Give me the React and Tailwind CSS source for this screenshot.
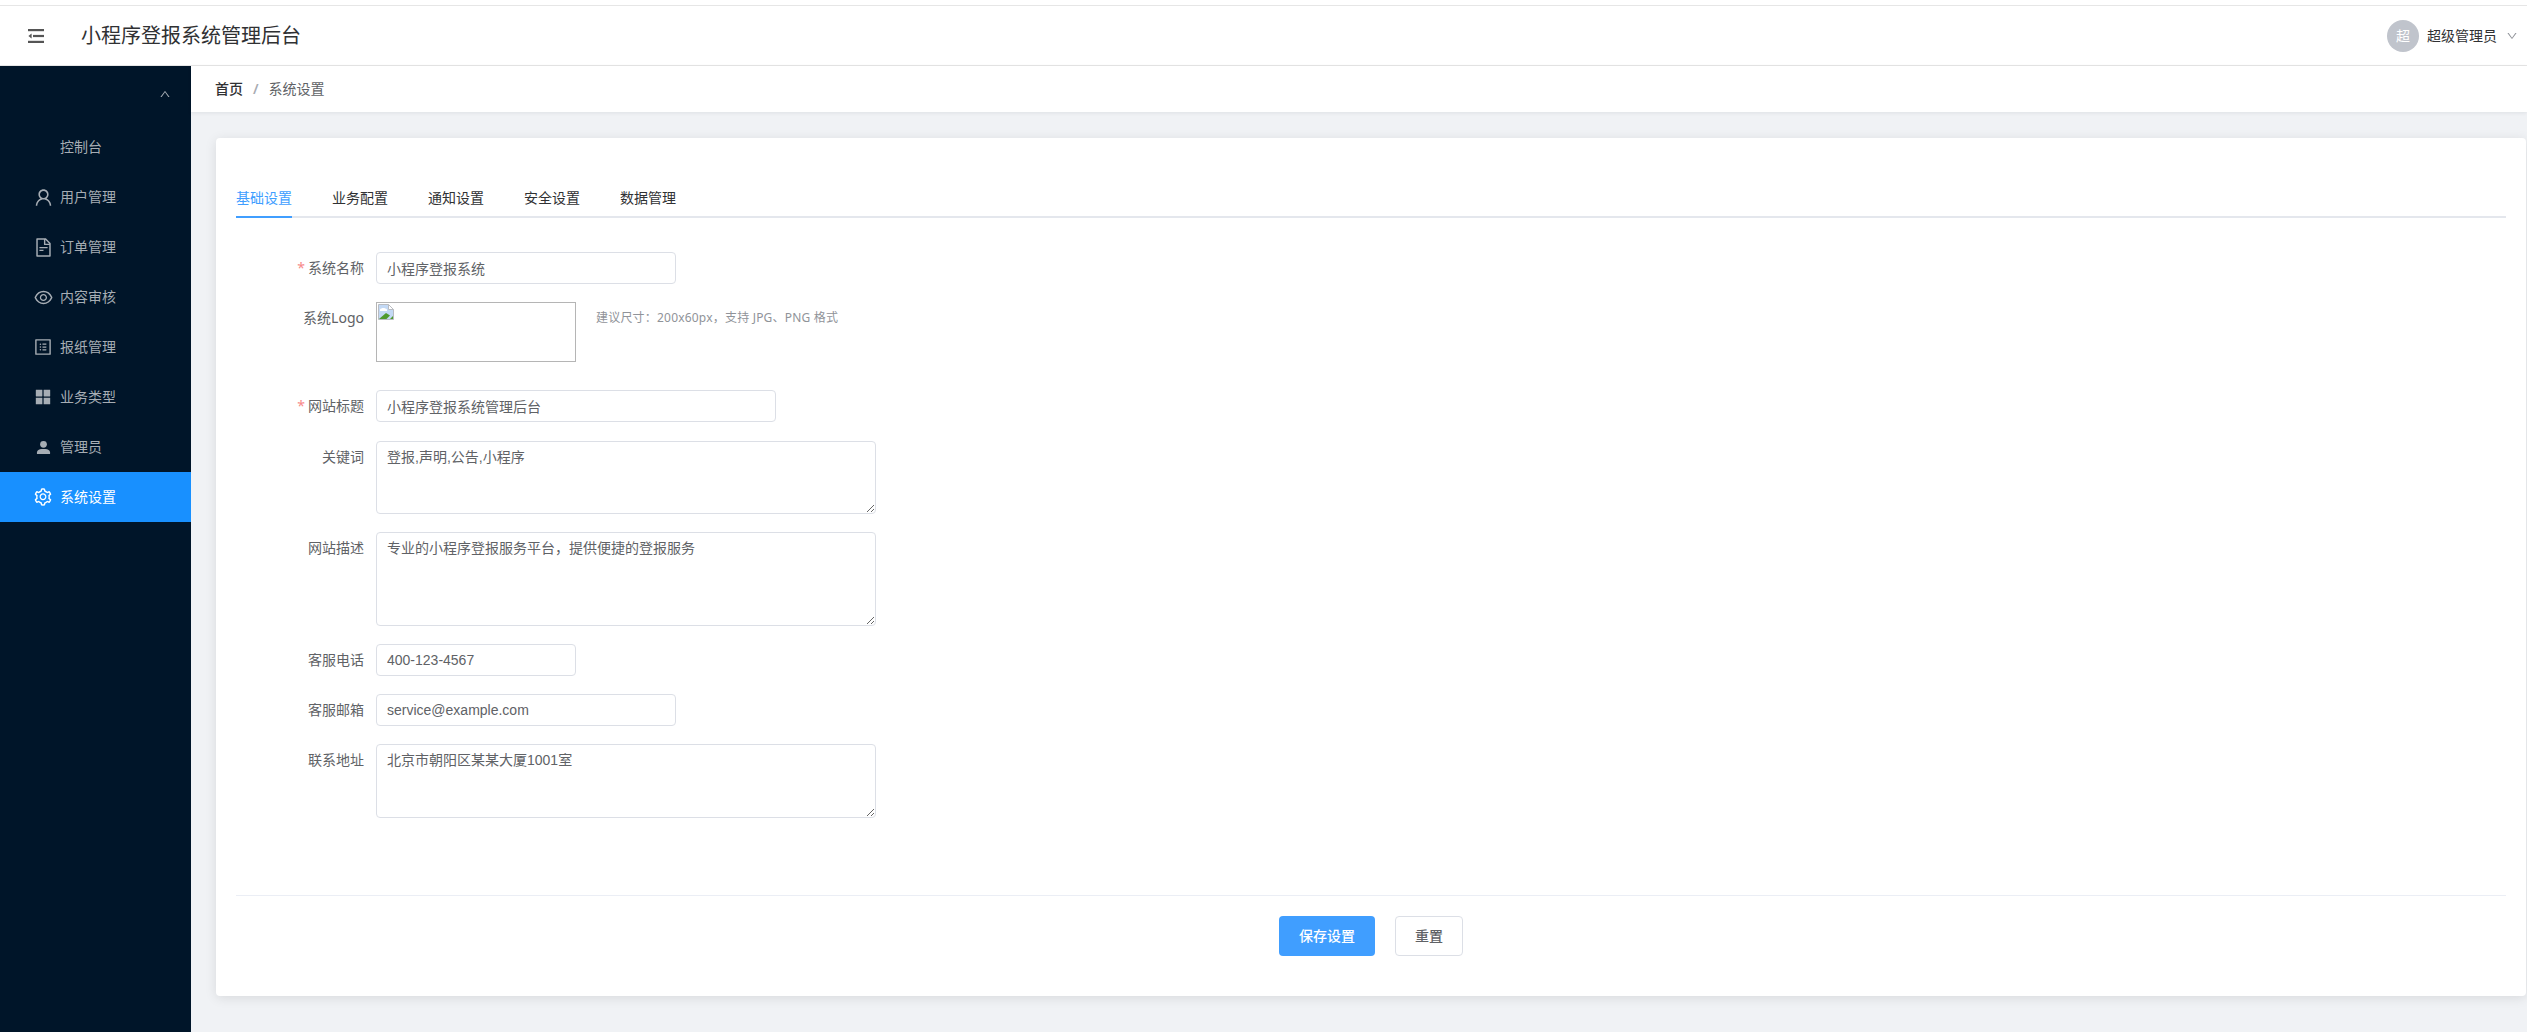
import React from "react";
import {
  AiOutlineUp,
  AiOutlineDown,
  AiOutlineUser,
  AiOutlineFileText,
  AiOutlineEye,
  AiOutlineProfile,
  AiFillAppstore,
  AiOutlineSetting,
} from "react-icons/ai";

function FoldIcon() {
  return (
    <svg viewBox="0 0 16 14" className="w-4 h-[14px] ml-[28px] text-[#555]" fill="currentColor">
      <rect x="0" y="0" width="16" height="2.2" />
      <rect x="5" y="5.9" width="11" height="2.2" />
      <rect x="0" y="11.8" width="16" height="2.2" />
      <path d="M3.6 4.6V9.4L0.4 7z" />
    </svg>
  );
}

function UserFilled({ className }) {
  return (
    <svg viewBox="0 0 16 16" className={className} fill="currentColor">
      <circle cx="8" cy="4.6" r="3.6" />
      <path d="M1 15v-1.6C1 11 3.4 9.6 6 9.6h4c2.6 0 5 1.4 5 3.8V15z" />
    </svg>
  );
}

function BrokenImage() {
  return (
    <svg viewBox="0 0 16 16" className="w-4 h-4 mt-px ml-px">
      <path d="M0.5 0.5H10.5L15.5 5.5V15.5H0.5z" fill="#c3d9f5" stroke="#b9bcc2" />
      <path d="M10.5 0.5V5.5H15.5z" fill="#fff" stroke="#b9bcc2" />
      <path d="M2 5.5C3.5 3.5 7 3.5 9 5.5V7H2z" fill="#fff" />
      <path d="M1 15L8 9L12 11.5L8.5 15z" fill="#4f9a2e" />
      <path d="M12 15L15 12V15z" fill="#4f9a2e" />
    </svg>
  );
}

const menu = [
  { label: "控制台" },
  { label: "用户管理", icon: <AiOutlineUser size={21} /> },
  { label: "订单管理", icon: <AiOutlineFileText size={21} /> },
  { label: "内容审核", icon: <AiOutlineEye size={21} /> },
  { label: "报纸管理", icon: <AiOutlineProfile size={20} /> },
  { label: "业务类型", icon: <AiFillAppstore size={20} /> },
  { label: "管理员", icon: <UserFilled className="w-[15px] h-[15px]" /> },
  { label: "系统设置", icon: <AiOutlineSetting size={20} />, active: true },
];

const tabs = ["基础设置", "业务配置", "通知设置", "安全设置", "数据管理"];

const inputCls =
  "block h-8 rounded-[4px] border border-[#dcdfe6] bg-white px-[10px] text-sm text-[#606266] outline-none font-['Liberation_Sans','Noto_Sans_CJK_SC',sans-serif]";
const areaCls =
  "block w-[500px] rounded-[4px] border border-[#dcdfe6] bg-white px-[10px] py-[5px] text-sm leading-[21px] text-[#606266] outline-none font-['Liberation_Sans','Noto_Sans_CJK_SC',sans-serif]";

function Row({ label, required, children, className = "" }) {
  return (
    <div className={`flex mb-[18px] ${className}`}>
      <label className="w-[120px] shrink-0 pr-3 text-right text-sm leading-8 text-[#606266]">
        {required && <span className="mr-[3px] text-[#f78989]">*</span>}
        {label}
      </label>
      {children}
    </div>
  );
}

export default function App() {
  return (
    <div
      lang="zh-CN"
      className="h-screen w-full overflow-hidden flex flex-col bg-[#f0f2f5] font-['Noto_Sans','Noto_Sans_CJK_SC',sans-serif]"
    >
      <div className="h-[6px] shrink-0 bg-white border-b border-[#e6e6e6]" />
      <header className="h-[60px] shrink-0 flex items-center bg-white border-b border-[#e6e6e6]">
        <FoldIcon />
        <h1 className="ml-[37px] text-xl text-[#303133]">小程序登报系统管理后台</h1>
        <div className="ml-auto flex items-center pr-[9px]">
          <div className="w-8 h-8 rounded-full bg-[#c0c4cc] text-white text-sm flex items-center justify-center">超</div>
          <span className="ml-2 text-sm text-[#303133]">超级管理员</span>
          <AiOutlineDown size={12} className="ml-[9px] text-[#909399]" />
        </div>
      </header>

      <div className="flex-1 flex min-h-0">
        <aside className="w-[191px] shrink-0 bg-[#001529] text-[#a6adb4]">
          <div className="h-[56px] flex items-center justify-end pr-[20px]">
            <AiOutlineUp size={12} />
          </div>
          {menu.map((item) => (
            <div
              key={item.label}
              className={`h-[50px] flex items-center text-sm ${item.active ? "bg-[#1890ff] text-white" : ""}`}
            >
              <span className="ml-[30px] w-[26px] mr-[4px] shrink-0 flex items-center justify-center">{item.icon}</span>
              {item.label}
            </div>
          ))}
        </aside>

        <main className="flex-1 min-w-0 flex flex-col">
          <div className="h-[46px] shrink-0 flex items-center pl-[24px] bg-white text-sm shadow-[0_1px_4px_rgba(0,21,41,0.08)]">
            <span className="font-medium text-[#303133]">首页</span>
            <span className="mx-[10px] font-semibold text-[#a8abb2]">/</span>
            <span className="text-[#606266]">系统设置</span>
          </div>

          <div className="flex-1 pt-[26px] pl-[25px] pr-px">
            <div className="rounded-[4px] bg-white pt-[40px] px-5 pb-10 shadow-[0_2px_12px_rgba(0,0,0,0.1)]">
              <div className="flex gap-10 h-10 border-b-2 border-[#e4e7ed]">
                {tabs.map((t, i) => (
                  <div
                    key={t}
                    className={`h-10 leading-10 text-sm ${i === 0 ? "text-[#409eff] border-b-2 border-[#409eff]" : "text-[#303133]"}`}
                  >
                    {t}
                  </div>
                ))}
              </div>

              <form className="pt-[34px] pl-5">
                <Row label="系统名称" required>
                  <input className={`${inputCls} w-[300px]`} defaultValue="小程序登报系统" />
                </Row>
                <Row label="系统Logo" className="h-[70px]">
                  <div className="w-[200px] h-[60px] border border-[#b5b5b5]">
                    <BrokenImage />
                  </div>
                  <span className="ml-5 text-xs leading-8 tracking-[0.2px] text-[#909399]">建议尺寸：200x60px，支持 JPG、PNG 格式</span>
                </Row>
                <Row label="网站标题" required>
                  <input className={`${inputCls} w-[400px]`} defaultValue="小程序登报系统管理后台" />
                </Row>
                <Row label="关键词" className="pt-px">
                  <textarea className={`${areaCls} h-[73px]`} defaultValue="登报,声明,公告,小程序" />
                </Row>
                <Row label="网站描述">
                  <textarea className={`${areaCls} h-[94px]`} defaultValue="专业的小程序登报服务平台，提供便捷的登报服务" />
                </Row>
                <Row label="客服电话">
                  <input className={`${inputCls} w-[200px]`} defaultValue="400-123-4567" />
                </Row>
                <Row label="客服邮箱">
                  <input className={`${inputCls} w-[300px]`} defaultValue="service@example.com" />
                </Row>
                <Row label="联系地址">
                  <textarea className={`${areaCls} h-[74px]`} defaultValue="北京市朝阳区某某大厦1001室" />
                </Row>
              </form>

              <div className="mt-[77px] pt-5 border-t border-[#ebeef5] flex justify-center gap-5">
                <button type="button" className="h-10 w-24 rounded-[4px] bg-[#409eff] text-sm font-medium text-white">
                  保存设置
                </button>
                <button type="button" className="h-10 w-[68px] rounded-[4px] border border-[#dcdfe6] bg-white text-sm font-medium text-[#606266]">
                  重置
                </button>
              </div>
            </div>
          </div>
        </main>
      </div>
    </div>
  );
}
